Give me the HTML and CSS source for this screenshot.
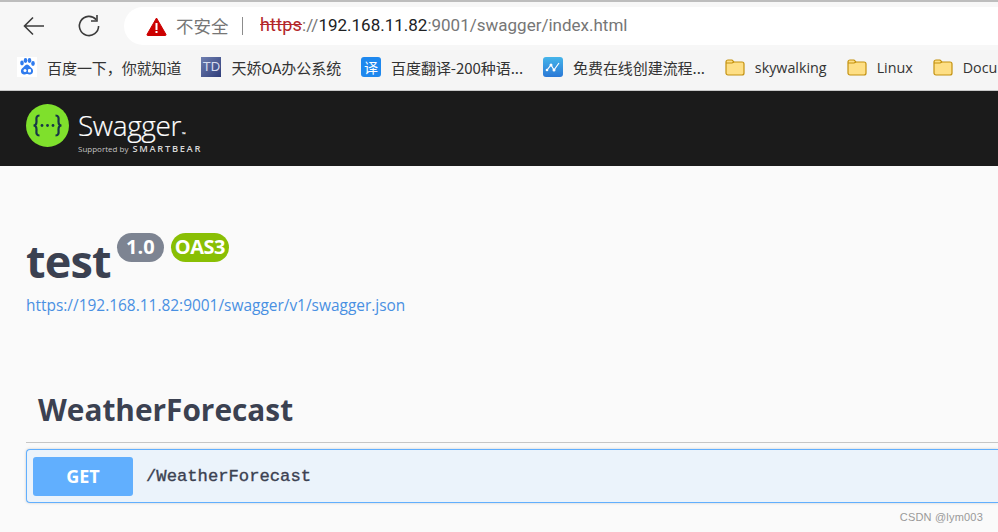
FILE: index.html
```html
<!DOCTYPE html>
<html lang="zh">
<head>
<meta charset="utf-8">
<title>Swagger UI</title>
<link rel="stylesheet" href="styles.css">
</head>
<body>
<div class="toolbar">
  <svg class="nav-icon" width="26" height="26" viewBox="0 0 26 26"><path d="M23 13H3.500M12 4.500L3.500 13l8.500 8.500" fill="none" stroke="#3c3c3c" stroke-width="1.600"/></svg>
  <svg class="nav-icon" width="26" height="26" viewBox="0 0 26 26"><path d="M20.200 6.600A9.600 9.600 0 1 0 22.600 13" fill="none" stroke="#3c3c3c" stroke-width="1.600"/><path d="M21 2v6h-6" fill="none" stroke="#3c3c3c" stroke-width="1.600"/></svg>
  <div class="omnibox">
    <svg width="21" height="19" viewBox="0 0 21 19"><path d="M10.500 1L20 17.500a.8.8 0 0 1-.7 1H1.700a.8.8 0 0 1-.7-1Z" fill="#cc0000" stroke="#cc0000" stroke-width="1"/><rect x="9.500" y="6" width="2" height="7" fill="#fff"/><rect x="9.500" y="14" width="2" height="2" fill="#fff"/></svg>
    <span class="insecure">不安全</span>
    <span class="divider"></span>
    <span class="url"><span class="scheme">https</span><span class="dim">://</span>192.168.11.82<span class="dim">:9001/swagger/index.html</span></span>
  </div>
</div>
<div class="bookmarks">
  <div class="bookmark">
    <svg width="20" height="20" viewBox="0 0 20 20"><rect width="20" height="20" fill="#fff"/><ellipse cx="5" cy="6" rx="1.800" ry="2.400" fill="#2f7bee"/><ellipse cx="8.500" cy="3.500" rx="1.800" ry="2.400" fill="#2f7bee"/><ellipse cx="12.500" cy="3.500" rx="1.800" ry="2.400" fill="#2f7bee"/><ellipse cx="16" cy="6.500" rx="1.800" ry="2.400" fill="#2f7bee"/><path d="M10 7.500c-2 0-3 2.500-5 4-2 2-1 6 2 6 1.500 0 2-.5 3-.5s1.500.5 3 .5c3 0 4-4 2-6-2-1.500-3-4-5-4z" fill="#2f7bee"/><circle cx="8" cy="13.500" r="1.500" fill="#fff"/><rect x="11" y="12" width="3" height="3.500" rx="1" fill="#fff"/></svg>
    <span>百度一下，你就知道</span>
  </div>
  <div class="bookmark">
    <span class="td-icon">TD</span>
    <span>天娇OA办公系统</span>
  </div>
  <div class="bookmark">
    <span class="fy-icon">译</span>
    <span>百度翻译-200种语...</span>
  </div>
  <div class="bookmark">
    <svg width="20" height="20" viewBox="0 0 20 20"><defs><linearGradient id="fl" x1="0" y1="0" x2="0" y2="1"><stop offset="0" stop-color="#45b5ea"/><stop offset="1" stop-color="#2a78d6"/></linearGradient></defs><rect width="20" height="20" rx="3" fill="url(#fl)"/><path d="M4 13l4-5 3 5 5-7" fill="none" stroke="#fff" stroke-width="1.200"/><circle cx="8" cy="8" r="1.500" fill="#fff"/><circle cx="11" cy="13" r="1.500" fill="#fff"/><circle cx="4" cy="13" r="1.300" fill="#fff"/></svg>
    <span>免费在线创建流程...</span>
  </div>
  <div class="bookmark">
    <svg width="20" height="18" viewBox="0 0 20 18"><path d="M1 4a2 2 0 0 1 2-2h4l2 2h8a2 2 0 0 1 2 2v9a2 2 0 0 1-2 2H3a2 2 0 0 1-2-2z" fill="#fedf85" stroke="#c4920f" stroke-width="1.200"/><path d="M1 5h6l2-1" fill="none" stroke="#c4920f" stroke-width="1.200"/></svg>
    <span class="latin">skywalking</span>
  </div>
  <div class="bookmark">
    <svg width="20" height="18" viewBox="0 0 20 18"><path d="M1 4a2 2 0 0 1 2-2h4l2 2h8a2 2 0 0 1 2 2v9a2 2 0 0 1-2 2H3a2 2 0 0 1-2-2z" fill="#fedf85" stroke="#c4920f" stroke-width="1.200"/><path d="M1 5h6l2-1" fill="none" stroke="#c4920f" stroke-width="1.200"/></svg>
    <span class="latin">Linux</span>
  </div>
  <div class="bookmark">
    <svg width="20" height="18" viewBox="0 0 20 18"><path d="M1 4a2 2 0 0 1 2-2h4l2 2h8a2 2 0 0 1 2 2v9a2 2 0 0 1-2 2H3a2 2 0 0 1-2-2z" fill="#fedf85" stroke="#c4920f" stroke-width="1.200"/><path d="M1 5h6l2-1" fill="none" stroke="#c4920f" stroke-width="1.200"/></svg>
    <span class="latin">Docu</span>
  </div>
</div>
<header class="topbar">
  <svg class="logo" width="43" height="43" viewBox="0 0 43 43"><circle cx="21.500" cy="21.500" r="21.500" fill="#7fe02c"/><path d="M13.500 11.500c-4 0-3 4-3 6 0 3-1 4-3 4 2 0 3 1 3 4 0 2-1 6 3 6M29.500 11.500c4 0 3 4 3 6 0 3 1 4 3 4-2 0-3 1-3 4 0 2 1 6-3 6" fill="none" stroke="#173647" stroke-width="2.200"/><circle cx="16" cy="21.500" r="1.400" fill="#173647"/><circle cx="21.500" cy="21.500" r="1.400" fill="#173647"/><circle cx="27" cy="21.500" r="1.400" fill="#173647"/></svg>
  <div class="brand">
    <div class="brand-name">Swagger<sup class="tm">™</sup></div>
    <div class="brand-sub"><span>Supported by</span><span class="bear">SMARTBEAR</span></div>
  </div>
</header>
<main class="page">
  <div class="info">
    <div class="title-row">
      <h1 class="title">test</h1>
      <span class="badge badge-version">1.0</span>
      <span class="badge badge-oas">OAS3</span>
    </div>
    <a class="spec-link" href="#">https://192.168.11.82:9001/swagger/v1/swagger.json</a>
  </div>
  <h2 class="tag">WeatherForecast</h2>
  <div class="opblock">
    <span class="method">GET</span>
    <span class="path">/WeatherForecast</span>
  </div>
</main>
<div class="watermark">CSDN @lym003</div>
</body>
</html>
```
FILE: styles.css
```css
* { box-sizing: border-box; }
html, body { margin: 0; height: 532px; overflow: hidden; }
body { width: 998px; background: #fafafa; position: relative; font-family: "Open Sans", "Noto Sans CJK SC", sans-serif; }

.toolbar { height: 50px; background: #f7f7f7; border-top: 2px solid #bdbdbd; padding: 5px 0 5px 21px; display: flex; align-items: center; }
.nav-icon { flex: none; margin-right: 29px; }
.toolbar .nav-icon + .nav-icon { margin-right: 22px; }
.omnibox { flex: 1; height: 38px; background: #fff; border-radius: 19px 0 0 19px; display: flex; align-items: center; padding-left: 22px; }
.insecure { margin-left: 9px; font: 17.500px "Noto Sans CJK SC", sans-serif; color: #767676; position: relative; top: -1px; }
.divider { width: 1.500px; height: 18px; background: #8c8c8c; margin: 0 17px 0 13px; }
.url { font: 17px/24px "Roboto", "Open Sans", sans-serif; color: #202124; white-space: nowrap; position: relative; top: -1px; }
.scheme { color: #b3262a; text-decoration: line-through; font-size: 18px; letter-spacing: .2px; }
.dim { color: #767676; }

.bookmarks { height: 41px; background: #f5f5f5; border-bottom: 1px solid #c8c8c8; display: flex; align-items: center; gap: 20px; padding: 0 0 6px 17px; overflow: hidden; white-space: nowrap; }
.bookmark { display: flex; align-items: center; flex: none; gap: 10px; font: 15px "Noto Sans CJK SC", sans-serif; color: #333; letter-spacing: -.06px; }
.latin { font: 14.300px "Open Sans", sans-serif; letter-spacing: 0; }
.td-icon { width: 20px; height: 20px; background: linear-gradient(135deg, #6f7fb0, #2f3d7a); color: #d6dcf0; font: 13px/20px "Liberation Sans", sans-serif; text-align: center; }
.fy-icon { width: 20px; height: 20px; border-radius: 3px; background: #1e88ee; color: #fff; font: 14px/20px "Noto Sans CJK SC", sans-serif; text-align: center; }

.topbar { height: 75px; background: #1b1b1b; display: flex; align-items: flex-start; padding: 13px 0 0 26px; }
.logo { flex: none; }
.brand { margin-left: 9px; color: #fff; }
.brand-name { font: 300 28px/30px "Open Sans", sans-serif; letter-spacing: -0.400px; margin-top: 6px; -webkit-text-stroke: .2px #fff; }
.tm { font-size: 5px; line-height: 0; vertical-align: baseline; margin-left: 1px; }
.brand-sub { display: flex; align-items: center; gap: 4px; margin-top: 3px; font: 8px/12px "Open Sans", sans-serif; color: #c4c4c4; }
.bear { font-weight: 600; letter-spacing: 1.700px; font-size: 9.300px; color: #d8d8d8; }

.page { padding: 67px 0 0 26px; }
.title-row { display: flex; align-items: flex-start; height: 60px; }
.title { margin: 0; font: 700 45px/55px "Open Sans", sans-serif; color: #3b4151; letter-spacing: -0.800px; }
.badge { height: 29px; border-radius: 14.500px; color: #fff; font: 700 20px/27px "Open Sans", sans-serif; text-align: center; }
.badge-version { width: 47px; margin-left: 6px; background: #7d8492; }
.badge-oas { width: 58px; margin-left: 7px; background: #89bf04; letter-spacing: -0.500px; }
.spec-link { display: block; margin-top: 2px; font: 15.450px/20px "Open Sans", sans-serif; color: #4990e2; text-decoration: none; }
.tag { margin: 74px 0 0; padding: 0 0 12px 12px; height: 54px; border-bottom: 1px solid #c6c6c6; font: 700 29.800px/42px "Open Sans", sans-serif; color: #3b4151; }
.opblock { margin-top: 6px; height: 54px; background: #ebf3fb; border: 1px solid #61affe; border-right: 0; border-radius: 4px 0 0 4px; box-shadow: 0 0 3px rgba(0,0,0,.19); display: flex; align-items: center; padding-left: 6px; }
.method { width: 100px; height: 39px; border-radius: 3px; background: #61affe; color: #fff; font: 700 18px/39px "Open Sans", sans-serif; text-align: center; }
.path { margin-left: 13px; font: 17.200px "Liberation Mono", monospace; color: #3b4151; -webkit-text-stroke: .35px #3b4151; }
.watermark { position: absolute; right: 15px; top: 509px; font: 11px/16px "Liberation Sans", sans-serif; letter-spacing: .2px; color: #999; }
```
